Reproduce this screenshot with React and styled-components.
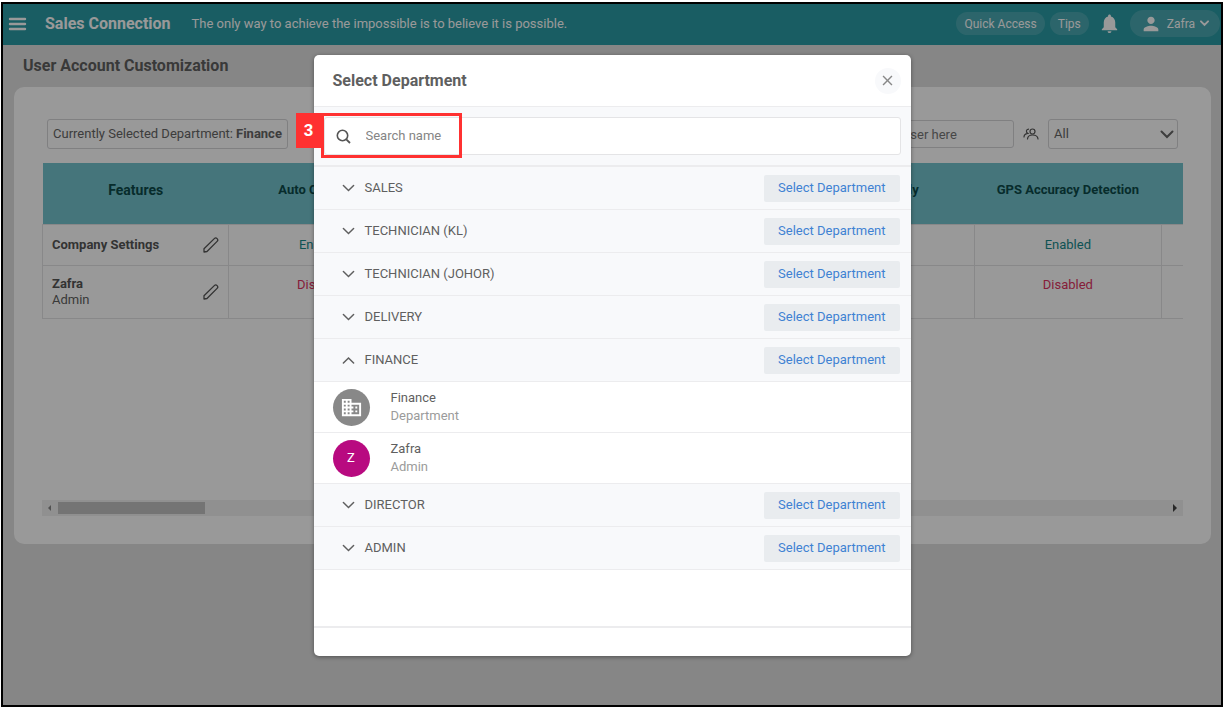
import { Fragment, useState } from 'react'
import styled, { createGlobalStyle, css, ThemeProvider } from 'styled-components'
import { MdBusiness, MdClose, MdNotifications, MdPerson } from 'react-icons/md'

const theme = {
  colors: {
    teal: '#2b9ba5',
    tableHead: '#73c3cd',
    page: '#dfdfdf',
    white: '#fff',
    text: '#5f5f5f',
    muted: '#9b9b9b',
    blue: '#3f82d3',
    red: '#ff3131',
    pink: '#b80a80',
    line: '#ececee',
    panel: '#f8f9fb',
  },
}

const GlobalStyle = createGlobalStyle`
  *, *::before, *::after {
    box-sizing: border-box;
  }

  body {
    margin: 0;
    padding: 2px 2px 3px 1px;
    background: #fff;
    font-family: Roboto, sans-serif;
    font-size: 13px;
    line-height: 16px;
  }

  button, input, select {
    font: inherit;
  }
`

const Frame = styled.div`
  position: relative;
  display: flex;
  flex-direction: column;
  min-height: calc(100vh - 5px);
  border: 2px solid #000;
  background: ${({ theme }) => theme.colors.page};
`

const TopBar = styled.header`
  display: flex;
  align-items: center;
  height: 41px;
  padding: 0 1px 2px 5px;
  color: ${({ theme }) => theme.colors.white};
  background: ${({ theme }) => theme.colors.teal};
`

const IconButton = styled.button`
  display: inline-flex;
  align-items: center;
  justify-content: center;
  padding: 0;
  border: 0;
  color: inherit;
  background: none;
  cursor: pointer;
`

const Brand = styled.strong`
  margin-left: 18px;
  font-size: 16px;
`

const Quote = styled.span`
  flex: 1;
  margin-left: 21px;
`

const Pill = styled.button`
  display: inline-flex;
  align-items: center;
  height: ${({ $tall }) => ($tall ? 27 : 23)}px;
  padding: ${({ $tall }) => ($tall ? '0 11px 0 10px' : '0 8px')};
  gap: 5px;
  border: 0;
  border-radius: 14px;
  font-size: 12px;
  color: inherit;
  background: rgba(255, 255, 255, 0.15);
  cursor: pointer;
`

const TopActions = styled.div`
  display: flex;
  align-items: center;

  & ${Pill} + ${Pill} {
    margin-left: 5px;
  }

  & ${IconButton} {
    margin: 0 9px;
  }
`

const PageTitle = styled.h1`
  margin: 0;
  padding: 10px 20px 11px;
  font-size: 16px;
  line-height: 21px;
  color: ${({ theme }) => theme.colors.text};
`

const Card = styled.main`
  margin: 0 10px 0 11px;
  padding: 32px 28px 28px;
  border-radius: 10px;
  background: ${({ theme }) => theme.colors.white};
`

const Filters = styled.div`
  display: flex;
  align-items: center;
  margin: 0 5px 14px;
  color: #666;
`

const field = css`
  height: 30px;
  border: 1px solid #d5d5d8;
  border-radius: 3px;
  color: #666;
  background: transparent;
`

const CurrentDepartment = styled.div`
  ${field}
  display: flex;
  align-items: center;
  gap: 3px;
  margin-right: auto;
  padding: 0 5px;
`

const UserSearch = styled.input`
  ${field}
  width: 164px;
  height: 28px;
  padding: 0 9px;

  &::placeholder {
    color: #777;
    opacity: 1;
  }
`

const GroupFilter = styled.label`
  display: flex;
  align-items: center;
  gap: 9px;
  margin-left: 9px;
`

const SelectBox = styled.span`
  display: grid;
  align-items: center;

  & > * {
    grid-area: 1 / 1;
  }

  & svg {
    justify-self: end;
    margin-right: 4px;
    pointer-events: none;
  }
`

const RoleSelect = styled.select`
  ${field}
  width: 130px;
  padding: 0 5px;
  appearance: none;
`

const TableWrap = styled.div`
  height: 337px;
  overflow: hidden;
`

const Table = styled.table`
  width: 1306px;
  table-layout: fixed;
  border-collapse: collapse;
`

const HeadCell = styled.th`
  height: 61px;
  padding: 0 8px 6px;
  font-size: ${({ $main }) => ($main ? 14 : 13)}px;
  color: #0c4a4a;
  background: ${({ theme }) => theme.colors.tableHead};
`

const Cell = styled.td`
  height: ${({ $tall }) => ($tall ? 53 : 41)}px;
  padding: ${({ $tall }) => ($tall ? '0 8px 13px' : '0 8px')};
  border: 1px solid #e3e3e5;
  text-align: center;
  color: ${({ $enabled }) => ($enabled ? '#188a8c' : '#e0335f')};
`

const NameCell = styled.th`
  padding: 0 9px;
  border: 1px solid #e3e3e5;
  text-align: left;
  font-weight: 400;
  color: ${({ theme }) => theme.colors.text};

  & > div {
    display: flex;
    align-items: center;
    justify-content: space-between;
  }

  & strong {
    display: block;
    color: #555;
  }
`

const ScrollTrack = styled.div`
  display: flex;
  align-items: center;
  height: 16px;
  padding: 0 5px;
  background: #f1f1f1;

  & svg:last-child {
    margin-left: auto;
  }
`

const ScrollThumb = styled.span`
  width: 147px;
  height: 12px;
  margin-left: 6px;
  background: #c1c1c1;
`

const Overlay = styled.div`
  position: absolute;
  inset: 0;
  display: flex;
  align-items: flex-start;
  justify-content: center;
  padding-top: 51px;
  background: rgba(0, 0, 0, 0.4);
`

const Modal = styled.section`
  width: 597px;
  border-radius: 5px;
  color: ${({ theme }) => theme.colors.text};
  background: ${({ theme }) => theme.colors.white};
  box-shadow: 0 1px 4px rgba(0, 0, 0, 0.4);
`

const ModalHeader = styled.div`
  display: flex;
  align-items: center;
  justify-content: space-between;
  height: 52px;
  padding: 0 10px 0 19px;
  border-bottom: 1px solid ${({ theme }) => theme.colors.line};

  & h2 {
    margin: 0;
    font-size: 16px;
  }

  & ${IconButton} {
    width: 26px;
    height: 26px;
    border-radius: 50%;
    color: #888;
    background: ${({ theme }) => theme.colors.panel};
  }
`

const SearchArea = styled.div`
  position: relative;
  padding: 10px;
  border-bottom: 2px solid ${({ theme }) => theme.colors.line};
  background: ${({ theme }) => theme.colors.panel};
`

const SearchField = styled.label`
  display: flex;
  align-items: center;
  gap: 15px;
  height: 38px;
  padding: 0 11px;
  border: 1px solid #e4e4e6;
  border-radius: 3px;
  background: ${({ theme }) => theme.colors.white};

  & input {
    flex: 1;
    padding: 0;
    border: 0;
    outline: none;
    color: inherit;
    background: none;
  }

  & input::placeholder {
    color: #858585;
    opacity: 1;
  }
`

const Marker = styled.div`
  position: absolute;
  top: 6px;
  left: 7px;
  width: 141px;
  height: 45px;
  border: 3px solid ${({ theme }) => theme.colors.red};
  pointer-events: none;
`

const MarkerNumber = styled.span`
  position: absolute;
  top: -3px;
  left: -28px;
  display: flex;
  align-items: center;
  justify-content: center;
  width: 26px;
  height: 35px;
  font-family: 'Liberation Sans', sans-serif;
  font-size: 17px;
  font-weight: 700;
  color: ${({ theme }) => theme.colors.white};
  background: ${({ theme }) => theme.colors.red};
`

const DepartmentRow = styled.div`
  display: flex;
  align-items: center;
  justify-content: space-between;
  height: 43px;
  padding: 0 11px 0 28px;
  border-bottom: 1px solid ${({ theme }) => theme.colors.line};
  background: ${({ theme }) => theme.colors.panel};
`

const Toggle = styled(IconButton)`
  gap: 10px;
`

const SelectButton = styled.button`
  height: 27px;
  padding: 0 14px;
  border: 0;
  border-radius: 2px;
  color: ${({ theme }) => theme.colors.blue};
  background: #e9ecef;
  cursor: pointer;
`

const MemberRow = styled.div`
  display: flex;
  align-items: center;
  gap: 21px;
  height: 51px;
  padding: 0 19px;
  border-bottom: 1px solid ${({ theme }) => theme.colors.line};
  line-height: 18px;

  & small {
    display: block;
    font-size: 13px;
    color: ${({ theme }) => theme.colors.muted};
  }
`

const Avatar = styled.span`
  display: flex;
  align-items: center;
  justify-content: center;
  width: 37px;
  height: 37px;
  border-radius: 50%;
  color: ${({ theme }) => theme.colors.white};
  background: ${({ $color }) => $color};
`

const ModalFooter = styled.div`
  height: 30px;
  margin-top: 56px;
  border-top: 2px solid ${({ theme }) => theme.colors.line};
`

const MenuIcon = () => (
  <svg width="19" height="14" viewBox="0 0 19 14" aria-hidden="true">
    <path d="M2 2h15M2 7h15M2 12h15" stroke="currentColor" strokeWidth="2.4" strokeLinecap="round" />
  </svg>
)

const Chevron = ({ up, width = 13, stroke = 1.6 }) => (
  <svg width={width} height={width / 2 + 2} viewBox="0 0 14 9" fill="none" aria-hidden="true">
    <path
      d={up ? 'M1.5 7.5 7 2l5.5 5.5' : 'M1.5 1.5 7 7l5.5-5.5'}
      stroke="currentColor"
      strokeWidth={stroke}
      strokeLinecap="round"
    />
  </svg>
)

const PencilIcon = () => (
  <svg width="16" height="16" viewBox="0 0 16 16" fill="none" stroke="#555" strokeLinejoin="round" aria-hidden="true">
    <path d="M1 15v-3.2L11.3 1.6c.9-.9 2-.8 2.8 0s.9 1.900 0 2.800L4 14.500z" strokeWidth="1.3" />
  </svg>
)

const PeopleIcon = () => (
  <svg width="16" height="12" viewBox="0 0 16 12" fill="none" stroke="#555" strokeLinecap="round" aria-hidden="true">
    <circle cx="9.5" cy="3.5" r="2.5" strokeWidth="1.2" />
    <path
      d="M4.5 11c.2-2.500 2-4 5-4s5.300 1.500 5.500 4M5.500 1.200a2.200 2.200 0 0 0-.8 4.200C2.500 5.800 1 7.200 1 9"
      strokeWidth="1.2"
    />
  </svg>
)

const SearchIcon = () => (
  <svg width="15" height="15" viewBox="0 0 15 15" fill="none" stroke="#555" aria-hidden="true">
    <circle cx="6.5" cy="6.5" r="5.2" strokeWidth="1.6" />
    <path d="m10.300 10.300 3.700 3.700" strokeWidth="1.8" />
  </svg>
)

const Arrow = ({ left }) => (
  <svg width="5" height="8" viewBox="0 0 5 8" aria-hidden="true">
    <path d={left ? 'M4 1v6L1 4z' : 'M0 0v8l4-4z'} fill={left ? '#888' : '#444'} />
  </svg>
)

const departments = ['SALES', 'TECHNICIAN (KL)', 'TECHNICIAN (JOHOR)', 'DELIVERY', 'FINANCE', 'DIRECTOR', 'ADMIN']

const members = {
  FINANCE: [
    { name: 'Finance', role: 'Department', color: '#888', avatar: <MdBusiness size={23} /> },
    { name: 'Zafra', role: 'Admin', color: theme.colors.pink, avatar: 'Z' },
  ],
}

const features = ['Auto Clock Out', '', '', 'Camera Only', 'GPS Accuracy Detection', '']

const accounts = [{ name: 'Company Settings', enabled: true }, { name: 'Zafra', role: 'Admin' }]

const FeatureTable = () => (
  <TableWrap>
    <Table>
      <thead>
        <tr>
          <HeadCell $main>Features</HeadCell>
          {features.map((name, i) => (
            <HeadCell key={i}>{name}</HeadCell>
          ))}
        </tr>
      </thead>
      <tbody>
        {accounts.map((row) => (
          <tr key={row.name}>
            <NameCell scope="row">
              <div>
                <span>
                  <strong>{row.name}</strong>
                  {row.role}
                </span>
                <IconButton aria-label={`Edit ${row.name}`}>
                  <PencilIcon />
                </IconButton>
              </div>
            </NameCell>
            {features.map((name, i) => (
              <Cell key={i} $enabled={row.enabled} $tall={!row.enabled}>
                {name && (row.enabled ? 'Enabled' : 'Disabled')}
              </Cell>
            ))}
          </tr>
        ))}
      </tbody>
    </Table>
  </TableWrap>
)

const DepartmentModal = () => {
  const [open, setOpen] = useState('FINANCE')

  return (
    <Modal role="dialog" aria-labelledby="modal-title">
      <ModalHeader>
        <h2 id="modal-title">Select Department</h2>
        <IconButton aria-label="Close">
          <MdClose size={17} />
        </IconButton>
      </ModalHeader>
      <SearchArea>
        <SearchField>
          <SearchIcon />
          <input type="text" placeholder="Search name" aria-label="Search name" />
        </SearchField>
        <Marker>
          <MarkerNumber>3</MarkerNumber>
        </Marker>
      </SearchArea>
      {departments.map((name) => (
        <Fragment key={name}>
          <DepartmentRow>
            <Toggle aria-expanded={open === name} onClick={() => setOpen(open === name ? null : name)}>
              <Chevron up={open === name} />
              {name}
            </Toggle>
            <SelectButton>Select Department</SelectButton>
          </DepartmentRow>
          {open === name &&
            members[name]?.map((member) => (
              <MemberRow key={member.name}>
                <Avatar $color={member.color}>{member.avatar}</Avatar>
                <span>
                  {member.name}
                  <small>{member.role}</small>
                </span>
              </MemberRow>
            ))}
        </Fragment>
      ))}
      <ModalFooter />
    </Modal>
  )
}

export default function App() {
  return (
    <ThemeProvider theme={theme}>
      <GlobalStyle />
      <Frame>
        <TopBar>
          <IconButton aria-label="Menu">
            <MenuIcon />
          </IconButton>
          <Brand>Sales Connection</Brand>
          <Quote>The only way to achieve the impossible is to believe it is possible.</Quote>
          <TopActions>
            <Pill>Quick Access</Pill>
            <Pill>Tips</Pill>
            <IconButton aria-label="Notifications">
              <MdNotifications size={23} />
            </IconButton>
            <Pill $tall>
              <MdPerson size={22} />
              Zafra
              <Chevron width={9} stroke={3} />
            </Pill>
          </TopActions>
        </TopBar>
        <PageTitle>User Account Customization</PageTitle>
        <Card>
          <Filters>
            <CurrentDepartment>
              Currently Selected Department: <strong>Finance</strong>
            </CurrentDepartment>
            <UserSearch type="text" placeholder="Search user here" aria-label="Search user" />
            <GroupFilter>
              <PeopleIcon />
              <SelectBox>
                <RoleSelect aria-label="Role">
                  <option>All</option>
                </RoleSelect>
                <Chevron width={14} stroke={2} />
              </SelectBox>
            </GroupFilter>
          </Filters>
          <FeatureTable />
          <ScrollTrack>
            <Arrow left />
            <ScrollThumb />
            <Arrow />
          </ScrollTrack>
        </Card>
        <Overlay>
          <DepartmentModal />
        </Overlay>
      </Frame>
    </ThemeProvider>
  )
}
